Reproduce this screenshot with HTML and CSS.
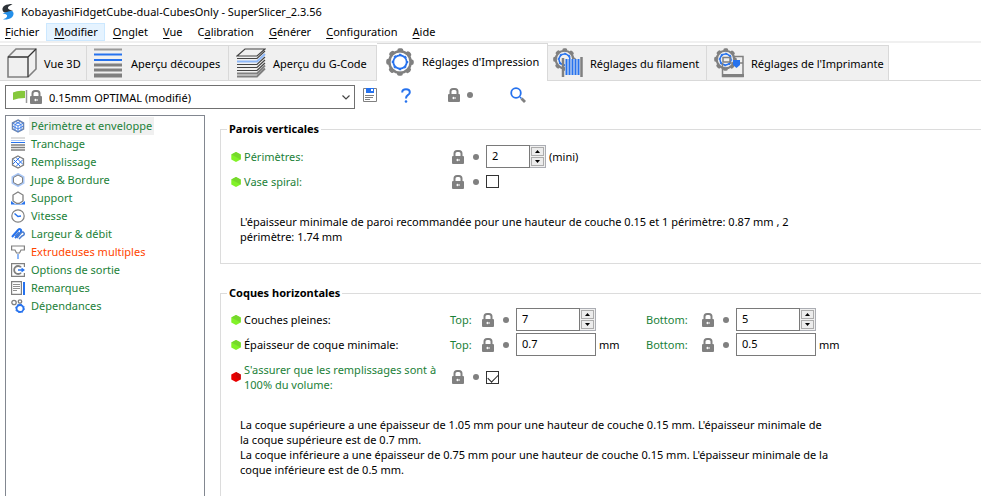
FILE: index.html
```html
<!DOCTYPE html>
<html lang="fr">
<head>
<meta charset="utf-8">
<title>KobayashiFidgetCube-dual-CubesOnly - SuperSlicer_2.3.56</title>
<link rel="stylesheet" href="styles.css">
</head>
<body>
<svg class="defs" aria-hidden="true">
  <symbol id="lock" viewBox="0 0 12 14"><path d="M2.500 7V3.500Q2.500 1 5 1H7Q9.500 1 9.500 3.500V7" fill="none" stroke="#808080" stroke-width="2"/><rect y="6" width="12" height="8" rx="1" fill="#808080"/><path d="M4 10l2-1.500V9.500H8V10.500H6V11.500z" fill="#fff"/></symbol>
  <symbol id="dot" viewBox="0 0 6 6"><circle cx="3" cy="3" r="3" fill="#808080"/></symbol>
  <symbol id="hex-green" viewBox="0 0 10 10"><path d="M5 0l4.700 2.500v5L5 10 .3 7.500v-5z" fill="#82f228"/><path d="M5 0l4.700 2.500v5L.3 2.500z" fill="#76d82c"/></symbol>
  <symbol id="hex-red" viewBox="0 0 10 10"><path d="M5 0l4.700 2.500v5L5 10 .3 7.500v-5z" fill="#e80000"/><path d="M5 0l4.700 2.500v5L5 5z" fill="#c80808"/></symbol>
  <symbol id="up" viewBox="0 0 5 3"><path d="M0 3L2.500 0 5 3z" fill="#000"/></symbol>
  <symbol id="down" viewBox="0 0 5 3"><path d="M0 0L2.500 3 5 0z" fill="#000"/></symbol>
  <symbol id="gear" viewBox="0 0 28 28"><circle cx="14" cy="14" r="10.700" fill="none" stroke="#808080" stroke-width="2.600"/><circle cx="14" cy="14" r="11.800" fill="none" stroke="#808080" stroke-width="4" stroke-linecap="round" stroke-dasharray="2 7.268" stroke-dashoffset="1"/><circle cx="14" cy="14" r="6.700" fill="none" stroke="#2672ee" stroke-width="1.800"/><circle cx="14" cy="14" r="7.600" fill="none" stroke="#2672ee" stroke-width="1.300" stroke-dasharray="2.600 3.369" stroke-dashoffset="1.300"/></symbol>
</svg>

<header class="titlebar">
  <svg width="12" height="16" viewBox="0 0 12 16"><path d="M10.500 0C4 0 0 2 .5 6c.3 2 2 3 5 2.500L11 7C8 6 5.500 5 6 3.500 6.500 2 8.500 1.500 10.500 0z" fill="#2d3338"/><path d="M1 15.500C8 16 12 13 11.500 9 11 6.500 9 6.500 6.500 7.500L.5 9.500c4 .5 5 1.500 4.500 3-.5 1.500-2 2-4 3z" fill="#2490ea"/></svg>
  <span>KobayashiFidgetCube-dual-CubesOnly - SuperSlicer_2.3.56</span>
</header>

<nav class="menubar">
  <button><u>F</u>ichier</button><button class="hot"><u>M</u>odifier</button><button><u>O</u>nglet</button><button><u>V</u>ue</button><button>C<u>a</u>libration</button><button><u>G</u>énérer</button><button><u>C</u>onfiguration</button><button><u>A</u>ide</button>
</nav>

<nav class="tabs">
  <button class="tab t1"><svg width="30" height="30" viewBox="0 0 30 30" fill="none"><path d="M1 9V29H21L29 21V1H9z" stroke="#808080" stroke-width="1.600"/><path d="M1 9H21V29M21 9L29 1" stroke="#333" stroke-width="1.300"/></svg><span>Vue 3D</span></button>
  <button class="tab t2"><svg width="28" height="30" viewBox="0 0 28 30"><path d="M0 1.500H28" stroke="#999" stroke-width="2"/><path d="M0 17H28M0 22H28" stroke="#808080" stroke-width="3"/><path d="M0 27.500H28" stroke="#808080" stroke-width="4"/><path d="M0 6.500H28M0 12H28" stroke="#2672ee" stroke-width="2"/></svg><span>Aperçu découpes</span></button>
  <button class="tab t3"><svg width="30" height="30" viewBox="0 0 30 30" fill="none" stroke="#444" stroke-width="1.200"><path d="M1 8L9 1H29L21 8z"/><path d="M1 10.500H21L29 3M1 16.500H21L29 9M1 19.500H21L29 12M1 22.500H21L29 15"/><path d="M1 13.500H21L29 6" stroke="#8db7f8" stroke-width="2"/><path d="M1 25.500H21L29 17.500M1 28.500H21L29 20.500" stroke="#808080" stroke-width="1.800"/></svg><span>Aperçu du G-Code</span></button>
  <button class="tab t4 active"><svg width="28" height="28"><use href="#gear"/></svg><span>Réglages d'Impression</span></button>
  <button class="tab t5"><svg width="30" height="30" viewBox="0 0 30 30"><use href="#gear" width="23" height="23"/><path d="M12 11H26V27H12z" fill="#efefef"/><path d="M13.500 11V27M16.500 11V27M19.500 11V27M22.500 11V27M25.500 11V27" stroke="#2672ee" stroke-width="2"/><path d="M10 10V29M28.500 9V29" stroke="#808080" stroke-width="2.500"/></svg><span>Réglages du filament</span></button>
  <button class="tab t6"><svg width="30" height="30" viewBox="0 0 30 30"><use href="#gear" width="23" height="23"/><path d="M8.500 15V28.500H29V8.500H20" fill="none" stroke="#808080" stroke-width="1.500"/><path d="M8 27.500H30" stroke="#808080" stroke-width="3"/><path d="M9 9.500H16V14H9zM16 15H29" fill="none" stroke="#808080" stroke-width="1.500"/><path d="M19 12H26V17L22.500 20 19 17z" fill="#2672ee"/></svg><span>Réglages de l'Imprimante</span></button>
</nav>

<div class="toolbar">
  <div class="preset">
    <svg class="flag" width="30" height="14" viewBox="0 0 30 14"><path d="M0 2.500Q5 0 12 1V8Q5 8 0 10z" fill="#86c83c"/><path d="M13.500 0V13" stroke="#999" stroke-width="1.500"/><use href="#lock" x="17" y="0" width="12" height="14"/></svg>
    <select aria-label="Préréglage d'impression"><option>0.15mm OPTIMAL (modifié)</option></select>
    <svg class="chevron" width="8" height="5" viewBox="0 0 8 5"><path d="M.5 .5L4 4 7.500 .5" fill="none" stroke="#444" stroke-width="1.200"/></svg>
  </div>
  <button class="tool save" aria-label="Enregistrer"><svg width="14" height="14" viewBox="0 0 14 14"><path d="M.5 .5H13.500V13.500H.5z" fill="#fff" stroke="#808080"/><path d="M3 0H11V5H3z" fill="#2672ee"/><path d="M8 1H10V3H8z" fill="#fff"/><path d="M2 7.500H11M2 9.500H10M2 11.500H7" stroke="#808080"/></svg></button>
  <button class="tool help" aria-label="Aide"><svg width="10" height="15" viewBox="0 0 10 15"><path d="M1.200 4.500Q1.200 1.200 5 1.200Q8.800 1.200 8.800 4.200Q8.800 6 6.800 7.200Q5 8.400 5 10.500" fill="none" stroke="#2672ee" stroke-width="2"/><circle cx="5" cy="13.500" r="1.300" fill="#2672ee"/></svg></button>
  <button class="tool reset" aria-label="Valeurs système"><svg width="12" height="14"><use href="#lock"/></svg><svg width="6" height="6"><use href="#dot"/></svg></button>
  <button class="tool find" aria-label="Rechercher"><svg width="16" height="16" viewBox="0 0 16 16"><circle cx="6" cy="6" r="4.800" fill="none" stroke="#2672ee" stroke-width="1.800"/><path d="M10 10l1.500 1.500" stroke="#2672ee" stroke-width="1.500"/><path d="M11.500 11.500L15 15" stroke="#808080" stroke-width="2.800"/></svg></button>
</div>

<div class="workspace">
  <ul class="pages">
    <li class="selected"><svg viewBox="0 0 14 14" fill="none"><path d="M7 1l5.500 3v6L7 13 1.500 10V4z" stroke="#6f86ad" stroke-width="1.500"/><path d="M1.500 4L7 7l5.500-3M7 7v6M4.500 2.500L10 5.500v6M9.500 2.500L4 5.500v6M1.500 7L7 10l5.500-3" stroke="#4683ea"/></svg><a href="#">Périmètre et enveloppe</a></li>
    <li><svg viewBox="0 0 14 14"><path d="M0 1H14" stroke="#bbb"/><path d="M0 3.500H14" stroke="#aac8f8"/><path d="M0 5.500H14" stroke="#2672ee"/><path d="M0 8H14M0 10.500H14M0 13H14" stroke="#808080" stroke-width="1.500"/></svg><a href="#">Tranchage</a></li>
    <li><svg viewBox="0 0 14 14" fill="none"><path d="M2.500 4.500l7 7M5 2.500l7 7M2 9l7-7M5 11.500L12 4.500" stroke="#2672ee"/><path d="M7 1l5.500 3v6L7 13 1.500 10V4z" stroke="#808080" stroke-width="1.300"/></svg><a href="#">Remplissage</a></li>
    <li><svg viewBox="0 0 14 14" fill="none"><path d="M7 1l5.500 3v6L7 13 1.500 10V4z" stroke="#a9c7f7" stroke-width="2"/><path d="M7 2l4.500 2.500v5L7 12 2.500 9.500v-5z" stroke="#808080"/></svg><a href="#">Jupe &amp; Bordure</a></li>
    <li><svg viewBox="0 0 14 14" fill="none"><path d="M0 10l4 3H0zM14 10l-4 3h4z" fill="#2672ee"/><path d="M7 1l5 3v6L8 12.500H6L2 10V4z" stroke="#808080" stroke-width="1.300"/><path d="M0 13.500H14" stroke="#8db7f8"/></svg><a href="#">Support</a></li>
    <li><svg viewBox="0 0 14 14" fill="none"><circle cx="7" cy="7" r="6.200" stroke="#808080" stroke-width="1.200"/><path d="M3.500 4.500L7 7.500l3-.5" stroke="#2672ee" stroke-width="1.500"/></svg><a href="#">Vitesse</a></li>
    <li><svg viewBox="0 0 14 14" fill="none"><path d="M1 10L7 3Q9 1 10 3T8 7L4 11" stroke="#2672ee" stroke-width="2"/><path d="M6 11L10 6Q12 4 13 6T11 9L8 12M4 9l4-4" stroke="#4c7fd0" stroke-width="1.500"/></svg><a href="#">Largeur &amp; débit</a></li>
    <li class="warn"><svg viewBox="0 0 14 14" fill="none"><path d="M.6 1H13.400V5H10L8.500 8H5.500L4 5H.6z" stroke="#808080" stroke-width="1.200"/><path d="M7 9V14" stroke="#8db7f8" stroke-width="2"/></svg><a href="#">Extrudeuses multiples</a></li>
    <li><svg viewBox="0 0 14 14" fill="none"><path d="M13.400 4V.6H.6V13.400H13.400V10" stroke="#808080" stroke-width="1.200"/><path d="M10 4.200A4 4 0 1 0 10 9.800" stroke="#808080" stroke-width="1.800"/><path d="M7 7H11" stroke="#2672ee" stroke-width="1.500"/><path d="M10.500 4.500L14 7l-3.500 2.500z" fill="#2672ee"/></svg><a href="#">Options de sortie</a></li>
    <li><svg viewBox="0 0 14 14" fill="none"><path d="M.6 .6H10.400V13.400H.6z" stroke="#808080" stroke-width="1.200"/><path d="M2 3.500H9M2 5.500H9M2 7.500H9M2 9.500H6" stroke="#909090"/><path d="M13 1V14" stroke="#2672ee" stroke-width="2"/></svg><a href="#">Remarques</a></li>
    <li><svg viewBox="0 0 14 14" fill="none"><circle cx="3" cy="3.500" r="2.200" stroke="#808080" stroke-width="1.300"/><circle cx="9" cy="2.500" r="1.700" stroke="#808080" stroke-width="1.300"/><circle cx="9" cy="9.500" r="3.500" stroke="#2672ee" stroke-width="1.800"/><circle cx="9" cy="9.500" r="4.400" stroke="#2672ee" stroke-dasharray="1.500 1.956"/></svg><a href="#">Dépendances</a></li>
  </ul>

  <main class="settings">
    <fieldset>
      <legend>Parois verticales</legend>
      <div class="row">
        <svg class="bullet"><use href="#hex-green"/></svg><label class="name" for="perimeters">Périmètres:</label>
        <div class="option"><svg class="lock"><use href="#lock"/></svg><svg class="dot"><use href="#dot"/></svg>
          <span class="spin short"><input id="perimeters" type="text" inputmode="numeric" value="2"><span class="arrows"><button aria-label="Augmenter"><svg><use href="#up"/></svg></button><button aria-label="Diminuer"><svg><use href="#down"/></svg></button></span></span><span class="unit">(mini)</span></div>
      </div>
      <div class="row">
        <svg class="bullet"><use href="#hex-green"/></svg><label class="name" for="vase">Vase spiral:</label>
        <div class="option"><svg class="lock"><use href="#lock"/></svg><svg class="dot"><use href="#dot"/></svg><input id="vase" class="check" type="checkbox"></div>
      </div>
      <p class="note">L'épaisseur minimale de paroi recommandée pour une hauteur de couche 0.15 et 1 périmètre: 0.87 mm , 2<br>périmètre: 1.74 mm</p>
    </fieldset>

    <fieldset class="shells">
      <legend>Coques horizontales</legend>
      <div class="row">
        <svg class="bullet"><use href="#hex-green"/></svg><span class="name plain">Couches pleines:</span>
        <div class="option"><label class="top" for="solid-top">Top:</label><svg class="lock"><use href="#lock"/></svg><svg class="dot"><use href="#dot"/></svg>
          <span class="spin"><input id="solid-top" type="text" inputmode="numeric" value="7"><span class="arrows"><button aria-label="Augmenter"><svg><use href="#up"/></svg></button><button aria-label="Diminuer"><svg><use href="#down"/></svg></button></span></span></div>
        <div class="option"><label class="bottom" for="solid-bottom">Bottom:</label><svg class="lock"><use href="#lock"/></svg><svg class="dot"><use href="#dot"/></svg>
          <span class="spin"><input id="solid-bottom" type="text" inputmode="numeric" value="5"><span class="arrows"><button aria-label="Augmenter"><svg><use href="#up"/></svg></button><button aria-label="Diminuer"><svg><use href="#down"/></svg></button></span></span></div>
      </div>
      <div class="row">
        <svg class="bullet"><use href="#hex-green"/></svg><span class="name plain">Épaisseur de coque minimale:</span>
        <div class="option"><label class="top" for="thick-top">Top:</label><svg class="lock"><use href="#lock"/></svg><svg class="dot"><use href="#dot"/></svg><input id="thick-top" class="field" type="text" value="0.7"><span class="unit">mm</span></div>
        <div class="option"><label class="bottom" for="thick-bottom">Bottom:</label><svg class="lock"><use href="#lock"/></svg><svg class="dot"><use href="#dot"/></svg><input id="thick-bottom" class="field" type="text" value="0.5"><span class="unit">mm</span></div>
      </div>
      <div class="row tall">
        <svg class="bullet"><use href="#hex-red"/></svg><label class="name" for="ensure">S'assurer que les remplissages sont à<br>100% du volume:</label>
        <div class="option"><svg class="lock"><use href="#lock"/></svg><svg class="dot"><use href="#dot"/></svg><input id="ensure" class="check" type="checkbox" checked></div>
      </div>
      <p class="note">La coque supérieure a une épaisseur de 1.05 mm pour une hauteur de couche 0.15 mm. L'épaisseur minimale de<br>la coque supérieure est de 0.7 mm.<br>La coque inférieure a une épaisseur de 0.75 mm pour une hauteur de couche 0.15 mm. L'épaisseur minimale de la<br>coque inférieure est de 0.5 mm.</p>
    </fieldset>
  </main>
</div>
</body>
</html>
```
FILE: styles.css
```css
* { box-sizing: border-box; }
body {
  margin: 0;
  height: 100vh;
  overflow: hidden;
  display: flex;
  flex-direction: column;
  background: #fff;
  color: #000;
  font: 11px/15px "Noto Sans", "Open Sans", sans-serif;
}
button, input, select { font: inherit; color: inherit; margin: 0; }
button { padding: 0; border: 0; background: none; white-space: nowrap; }
svg { display: block; flex: none; }
.defs { position: absolute; width: 0; height: 0; }

.titlebar { display: flex; align-items: center; gap: 7px; height: 23px; padding-left: 2px; flex: none; white-space: nowrap; }

.menubar { display: flex; height: 20px; flex: none; border-bottom: 2px solid #f0f0f0; }
.menubar button { height: 18px; padding: 0 6px 0 7px; border: 1px solid transparent; line-height: 16px; }
.menubar button:first-child { padding-left: 4px; }
.menubar .hot { background: #e5f3ff; border-color: #cce8ff; }
.menubar u { text-underline-offset: 2px; }

.tabs { display: flex; align-items: flex-end; height: 38px; flex: none; box-shadow: inset 0 -1px #d9d9d9; }
.tab { display: flex; align-items: center; height: 36px; gap: 7px; padding: 0 0 0 7px; background: #f0f0f0; border: 1px solid #d9d9d9; border-left: 0; }
.tab.active { height: 38px; padding-bottom: 2px; padding-left: 9px; background: #fff; border-bottom: 0; }
.t1 { width: 87px; }
.t2 { width: 142px; gap: 9px; }
.t3 { width: 148px; }
.t4 { width: 171px; gap: 8px; }
.t5 { width: 159px; padding-left: 5px; }
.t6 { width: 182px; }

.toolbar { display: flex; align-items: center; height: 34px; padding: 0 0 2px 5px; flex: none; }
.preset { position: relative; width: 350px; height: 24px; }
.preset select { appearance: none; width: 100%; height: 100%; padding: 0 20px 0 43px; border: 1px solid #707070; border-radius: 0; background: #fff; }
.flag { position: absolute; left: 8px; top: 5px; }
.chevron { position: absolute; right: 5px; top: 10px; }
.tool { display: flex; align-items: center; gap: 7px; margin-bottom: 4px; }
.save { margin-left: 8px; }
.help { margin-left: 24px; }
.reset { margin-left: 37px; }
.find { margin-left: 37px; }

.workspace { display: flex; flex: 1; min-height: 0; }
.pages { width: 200px; flex: none; margin: 0 0 0 5px; padding: 1px 0 0 5px; border: 1px solid #828790; border-bottom: 0; list-style: none; }
.pages li { display: flex; align-items: center; gap: 4px; height: 18px; }
.pages svg { width: 14px; height: 14px; }
.pages a { padding: 0 2px; line-height: 18px; color: #1b8138; text-decoration: none; }
.pages .selected a { background: #f0f0f0; }
.pages .warn a { color: #ff4500; }

.settings { flex: 1; min-width: 0; padding: 6px 0 0 15px; }
fieldset { min-width: 0; margin: 0 0 21px; padding: 7px 0 19px 10px; border: 1px solid #dcdcdc; border-right: 0; }
.shells { padding-top: 6px; padding-bottom: 40px; }
legend { margin-left: -4px; padding: 0 2px; font-weight: 700; line-height: 16px; }
.row { display: flex; align-items: center; height: 25px; white-space: nowrap; }
.tall { height: 40px; }
.bullet { width: 10px; height: 10px; margin-right: 3px; }
.name { width: 206px; flex: none; color: #1b8138; }
.name.plain { color: #000; }
.option { display: flex; align-items: center; width: 196px; flex: none; }
.lock { width: 12px; height: 14px; margin: 0 9px 0 2px; }
.dot { width: 6px; height: 6px; margin-right: 7px; }
.top, .bottom { color: #1b8138; flex: none; }
.top { width: 30px; }
.bottom { width: 54px; }
.unit { margin-left: 3px; }
.field, .spin { width: 80px; height: 23px; flex: none; }
.field { padding: 0 5px 2px; border: 1px solid #7a7a7a; }
.spin { display: flex; }
.spin.short { width: 60px; }
.spin input { flex: 1; min-width: 0; padding: 0 5px 2px; border: 1px solid #7a7a7a; }
.arrows { display: flex; flex-direction: column; width: 16px; border: 1px solid #abadb3; border-left: 0; background: #f0f0f0; padding: 1px; gap: 1px; }
.arrows button { display: flex; align-items: center; justify-content: center; flex: 1; border: 1px solid #acacac; background: #ececec; }
.arrows svg { width: 5px; height: 3px; }
.check { appearance: none; width: 13px; height: 13px; border: 1px solid #333; background: #fff; }
.check:checked::after { content: ""; display: block; width: 9px; height: 5px; margin: 2px 0 0 1px; border: solid #222; border-width: 0 0 1px 1px; transform: rotate(-45deg); }
.note { margin: 20px 0 0 9px; white-space: nowrap; }
```
